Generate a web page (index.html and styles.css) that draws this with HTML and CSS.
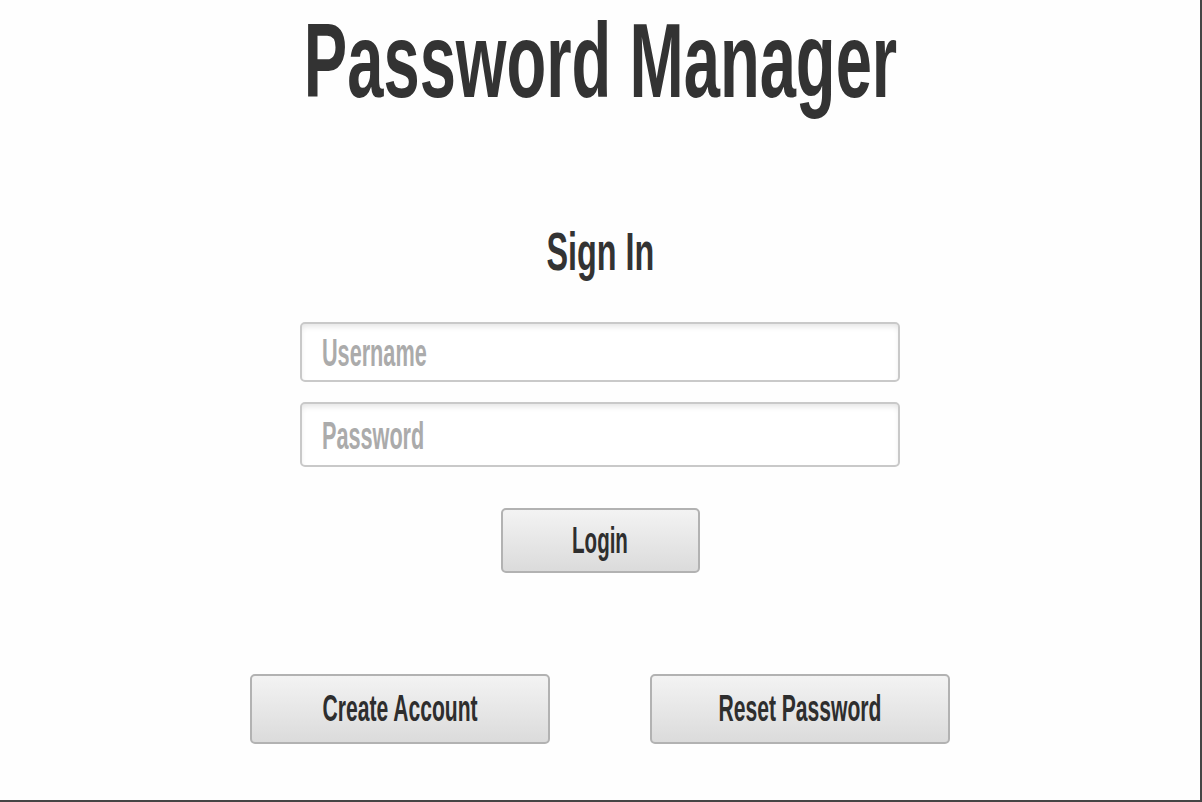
FILE: index.html
```html
<!DOCTYPE html>
<html lang="en">
<head>
<meta charset="utf-8">
<title>Password Manager</title>
<link rel="stylesheet" href="styles.css">
</head>
<body>
<div class="page">
  <h1 class="title"><span class="cond">Password Manager</span></h1>
  <h2 class="subtitle"><span class="cond">Sign In</span></h2>
  <form class="signin" onsubmit="return false">
    <div class="field field-user"><input class="field-input" type="text" placeholder="Username"></div>
    <div class="field field-pass"><input class="field-input" type="password" placeholder="Password"></div>
    <button class="btn btn-login" type="submit"><span class="cond">Login</span></button>
  </form>
  <div class="actions">
    <button class="btn btn-wide" type="button"><span class="cond">Create Account</span></button>
    <button class="btn btn-wide" type="button"><span class="cond">Reset Password</span></button>
  </div>
</div>
</body>
</html>
```

FILE: styles.css
```css
html, body {
  margin: 0;
  padding: 0;
  background: #ffffff;
}

.page {
  width: 1200px;
  height: 800px;
  border-right: 2px solid #454545;
  border-bottom: 2px solid #454545;
  background: #fefefe;
  display: flex;
  flex-direction: column;
  align-items: center;
  font-family: "Liberation Sans", Arial, sans-serif;
  font-weight: bold;
  color: #333333;
}

.cond {
  display: inline-block;
  transform-origin: center;
  white-space: nowrap;
}

.title {
  margin: 8px 0 0;
  font-size: 105px;
  line-height: 105px;
  font-weight: bold;
}

.title .cond {
  transform: scaleX(0.62);
}

.subtitle {
  margin: 112px 0 0;
  font-size: 53px;
  line-height: 53px;
  font-weight: bold;
}

.subtitle .cond {
  transform: scaleX(0.61);
}

.signin {
  margin-top: 44px;
  display: flex;
  flex-direction: column;
  align-items: center;
}

.field {
  box-sizing: border-box;
  width: 600px;
  border: 2px solid #c9c9c9;
  border-radius: 5px;
  background: #ffffff;
  box-shadow: inset 0 4px 6px -2px rgba(0, 0, 0, 0.12);
  overflow: hidden;
  display: flex;
}

.field-input {
  box-sizing: border-box;
  flex: none;
  width: 1004px;
  height: 100%;
  border: none;
  background: transparent;
  padding: 3px 0 0 35px;
  margin: 0;
  font-family: "Liberation Sans", Arial, sans-serif;
  font-weight: bold;
  font-size: 38px;
  color: #333333;
  outline: none;
  transform: scaleX(0.57);
  transform-origin: left center;
}

.field-input::placeholder {
  color: #ababab;
}

.field-user {
  height: 60px;
}

.field-pass {
  height: 65px;
  margin-top: 20px;
}

.btn {
  box-sizing: border-box;
  border: 2px solid #b2b2b2;
  border-radius: 5px;
  background: linear-gradient(#f3f3f3, #dbdbdb);
  color: #2e2e2e;
  font-family: "Liberation Sans", Arial, sans-serif;
  font-weight: bold;
  padding: 0;
  cursor: pointer;
}

.btn .cond {
  transform: scaleX(0.57);
}

.btn-login {
  margin-top: 41px;
  width: 199px;
  height: 65px;
  font-size: 36px;
}

.actions {
  margin-top: 101px;
  display: flex;
  gap: 100px;
}

.btn-wide {
  width: 300px;
  height: 70px;
  font-size: 37px;
}
```
